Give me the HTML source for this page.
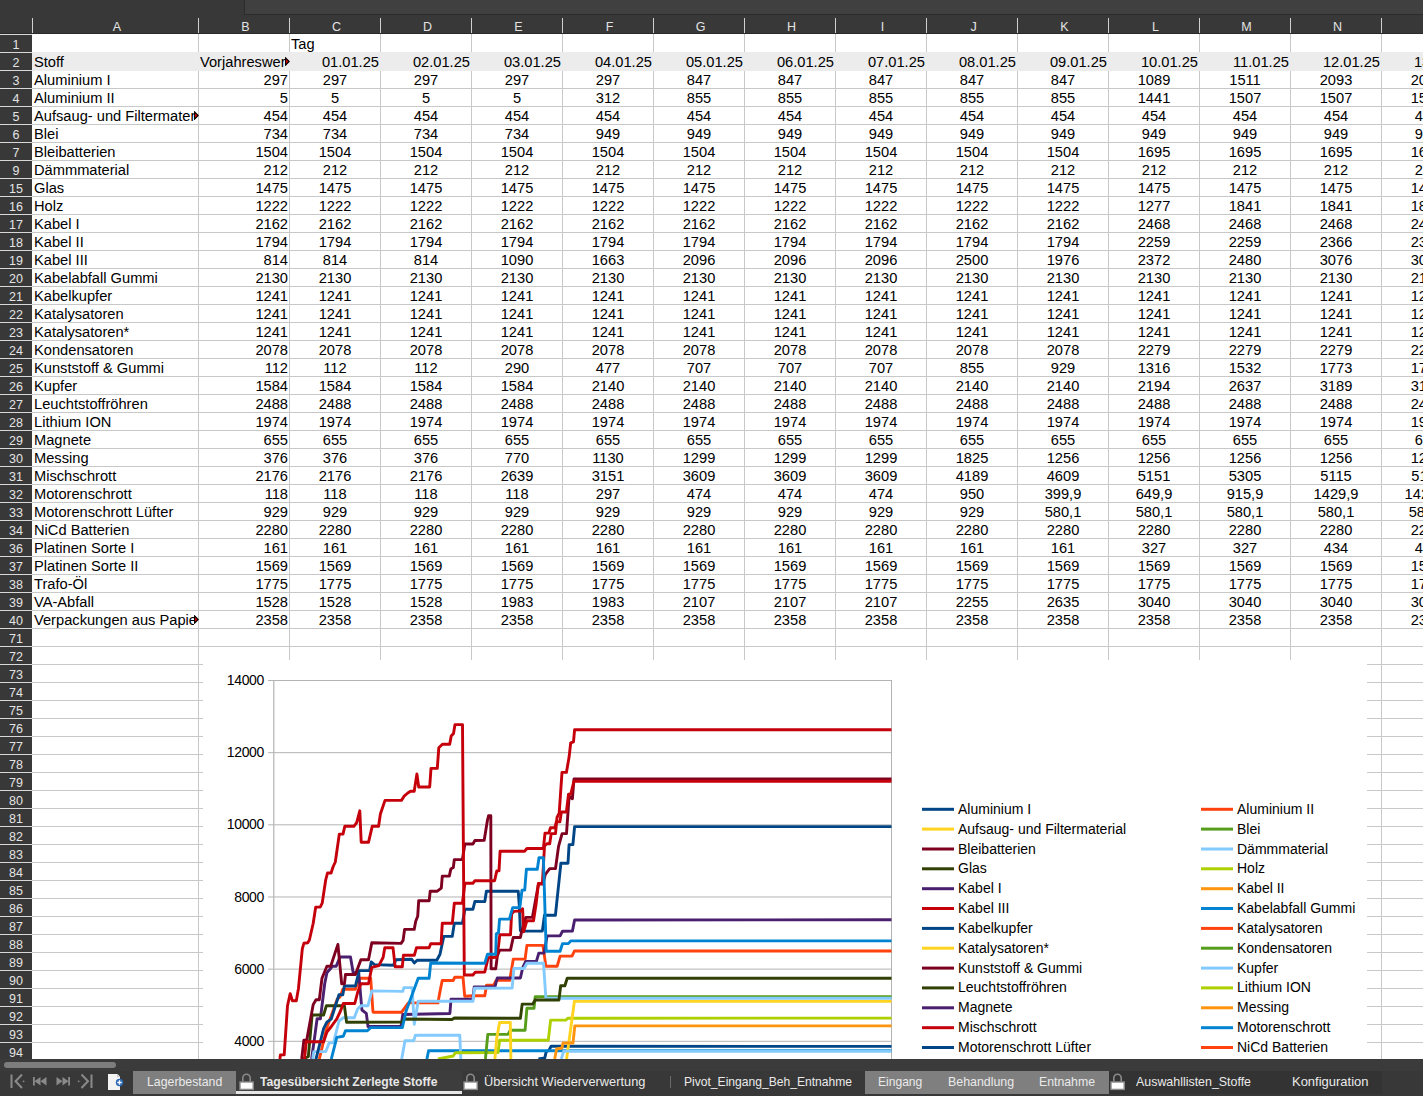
<!DOCTYPE html>
<html><head><meta charset="utf-8"><style>
*{margin:0;padding:0;box-sizing:border-box}
html,body{width:1423px;height:1096px;overflow:hidden;background:#383838;font-family:"Liberation Sans",sans-serif}
#top{position:absolute;left:0;top:0;width:1423px;height:34px;background:#383838}
#tbox{position:absolute;left:244px;top:0;width:1179px;height:15px;background:#404040;border-left:1px solid #2c2c2c;border-bottom:1px solid #2c2c2c}
#hdark{position:absolute;left:0;top:33px;width:1423px;height:1px;background:#2a2a2a}
#cells{position:absolute;left:32px;top:34px;width:1391px;height:1025px;background:#fff;overflow:hidden}
#cells > div{position:absolute}
.hl{left:0;width:1391px;height:1px;background:#c8c8c8}
.vl{top:0;height:1025px;width:1px;background:#c8c8c8}
.g2{top:18px;left:0;width:1391px;height:19px;background:#ececec}
.c{height:18px;font-size:14.67px;line-height:18px;color:#000;white-space:nowrap;padding:1px 1px 0 2px;overflow:visible}
.clip{overflow:hidden}
.l{text-align:left}
.r{text-align:right}
.m{text-align:center}
.arr{width:0;height:0;border-top:3px solid transparent;border-bottom:3px solid transparent;border-left:5px solid #000}
.rh{position:absolute;left:0;width:32px;height:17px;color:#e4e4e4;font-size:12.5px;line-height:17px;text-align:center}
.rsep{position:absolute;left:0;width:32px;height:1px;background:#d8d8d8}
.ch{position:absolute;top:19px;height:16px;color:#e4e4e4;font-size:12.5px;line-height:17px;text-align:center}
.csep{position:absolute;top:18px;width:1px;height:15px;background:#d0d0d0}

.hl{position:absolute;left:32px;width:1391px;height:1px;background:#c8c8c8}
.vl{position:absolute;top:34px;height:1025px;width:1px;background:#c8c8c8}
.g2{position:absolute;top:52px;left:32px;width:1391px;height:19px;background:#ececec}
.c,.arr{position:absolute}
</style></head><body>
<div id="top"><div id="tbox"></div></div>
<div class="csep" style="left:32px"></div>
<div class="csep" style="left:198px"></div>
<div class="csep" style="left:289px"></div>
<div class="csep" style="left:380px"></div>
<div class="csep" style="left:471px"></div>
<div class="csep" style="left:562px"></div>
<div class="csep" style="left:653px"></div>
<div class="csep" style="left:744px"></div>
<div class="csep" style="left:835px"></div>
<div class="csep" style="left:926px"></div>
<div class="csep" style="left:1017px"></div>
<div class="csep" style="left:1108px"></div>
<div class="csep" style="left:1199px"></div>
<div class="csep" style="left:1290px"></div>
<div class="csep" style="left:1381px"></div>
<div id="hdark"></div>
<div class="rsep" style="top:34px"></div>
<div class="rsep" style="top:52px"></div>
<div class="rsep" style="top:70px"></div>
<div class="rsep" style="top:88px"></div>
<div class="rsep" style="top:106px"></div>
<div class="rsep" style="top:124px"></div>
<div class="rsep" style="top:142px"></div>
<div class="rsep" style="top:160px"></div>
<div class="rsep" style="top:178px"></div>
<div class="rsep" style="top:196px"></div>
<div class="rsep" style="top:214px"></div>
<div class="rsep" style="top:232px"></div>
<div class="rsep" style="top:250px"></div>
<div class="rsep" style="top:268px"></div>
<div class="rsep" style="top:286px"></div>
<div class="rsep" style="top:304px"></div>
<div class="rsep" style="top:322px"></div>
<div class="rsep" style="top:340px"></div>
<div class="rsep" style="top:358px"></div>
<div class="rsep" style="top:376px"></div>
<div class="rsep" style="top:394px"></div>
<div class="rsep" style="top:412px"></div>
<div class="rsep" style="top:430px"></div>
<div class="rsep" style="top:448px"></div>
<div class="rsep" style="top:466px"></div>
<div class="rsep" style="top:484px"></div>
<div class="rsep" style="top:502px"></div>
<div class="rsep" style="top:520px"></div>
<div class="rsep" style="top:538px"></div>
<div class="rsep" style="top:556px"></div>
<div class="rsep" style="top:574px"></div>
<div class="rsep" style="top:592px"></div>
<div class="rsep" style="top:610px"></div>
<div class="rsep" style="top:628px"></div>
<div class="rsep" style="top:646px"></div>
<div class="rsep" style="top:664px"></div>
<div class="rsep" style="top:682px"></div>
<div class="rsep" style="top:700px"></div>
<div class="rsep" style="top:718px"></div>
<div class="rsep" style="top:736px"></div>
<div class="rsep" style="top:754px"></div>
<div class="rsep" style="top:772px"></div>
<div class="rsep" style="top:790px"></div>
<div class="rsep" style="top:808px"></div>
<div class="rsep" style="top:826px"></div>
<div class="rsep" style="top:844px"></div>
<div class="rsep" style="top:862px"></div>
<div class="rsep" style="top:880px"></div>
<div class="rsep" style="top:898px"></div>
<div class="rsep" style="top:916px"></div>
<div class="rsep" style="top:934px"></div>
<div class="rsep" style="top:952px"></div>
<div class="rsep" style="top:970px"></div>
<div class="rsep" style="top:988px"></div>
<div class="rsep" style="top:1006px"></div>
<div class="rsep" style="top:1024px"></div>
<div class="rsep" style="top:1042px"></div>
<div id="cellsbg" style="position:absolute;left:32px;top:34px;width:1391px;height:1025px;background:#fff"></div>
<div class="hl" style="top:70px"></div>
<div class="hl" style="top:88px"></div>
<div class="hl" style="top:106px"></div>
<div class="hl" style="top:124px"></div>
<div class="hl" style="top:142px"></div>
<div class="hl" style="top:160px"></div>
<div class="hl" style="top:178px"></div>
<div class="hl" style="top:196px"></div>
<div class="hl" style="top:214px"></div>
<div class="hl" style="top:232px"></div>
<div class="hl" style="top:250px"></div>
<div class="hl" style="top:268px"></div>
<div class="hl" style="top:286px"></div>
<div class="hl" style="top:304px"></div>
<div class="hl" style="top:322px"></div>
<div class="hl" style="top:340px"></div>
<div class="hl" style="top:358px"></div>
<div class="hl" style="top:376px"></div>
<div class="hl" style="top:394px"></div>
<div class="hl" style="top:412px"></div>
<div class="hl" style="top:430px"></div>
<div class="hl" style="top:448px"></div>
<div class="hl" style="top:466px"></div>
<div class="hl" style="top:484px"></div>
<div class="hl" style="top:502px"></div>
<div class="hl" style="top:520px"></div>
<div class="hl" style="top:538px"></div>
<div class="hl" style="top:556px"></div>
<div class="hl" style="top:574px"></div>
<div class="hl" style="top:592px"></div>
<div class="hl" style="top:610px"></div>
<div class="hl" style="top:628px"></div>
<div class="hl" style="top:646px"></div>
<div class="hl" style="top:664px"></div>
<div class="hl" style="top:682px"></div>
<div class="hl" style="top:700px"></div>
<div class="hl" style="top:718px"></div>
<div class="hl" style="top:736px"></div>
<div class="hl" style="top:754px"></div>
<div class="hl" style="top:772px"></div>
<div class="hl" style="top:790px"></div>
<div class="hl" style="top:808px"></div>
<div class="hl" style="top:826px"></div>
<div class="hl" style="top:844px"></div>
<div class="hl" style="top:862px"></div>
<div class="hl" style="top:880px"></div>
<div class="hl" style="top:898px"></div>
<div class="hl" style="top:916px"></div>
<div class="hl" style="top:934px"></div>
<div class="hl" style="top:952px"></div>
<div class="hl" style="top:970px"></div>
<div class="hl" style="top:988px"></div>
<div class="hl" style="top:1006px"></div>
<div class="hl" style="top:1024px"></div>
<div class="hl" style="top:1042px"></div>
<div class="vl" style="left:198px"></div>
<div class="vl" style="left:289px"></div>
<div class="vl" style="left:380px"></div>
<div class="vl" style="left:471px"></div>
<div class="vl" style="left:562px"></div>
<div class="vl" style="left:653px"></div>
<div class="vl" style="left:744px"></div>
<div class="vl" style="left:835px"></div>
<div class="vl" style="left:926px"></div>
<div class="vl" style="left:1017px"></div>
<div class="vl" style="left:1108px"></div>
<div class="vl" style="left:1199px"></div>
<div class="vl" style="left:1290px"></div>
<div class="vl" style="left:1381px"></div>
<div class="g2"></div>
<div class="rh" style="top:37px">1</div>
<div class="rh" style="top:55px">2</div>
<div class="rh" style="top:73px">3</div>
<div class="rh" style="top:91px">4</div>
<div class="rh" style="top:109px">5</div>
<div class="rh" style="top:127px">6</div>
<div class="rh" style="top:145px">7</div>
<div class="rh" style="top:163px">9</div>
<div class="rh" style="top:181px">15</div>
<div class="rh" style="top:199px">16</div>
<div class="rh" style="top:217px">17</div>
<div class="rh" style="top:235px">18</div>
<div class="rh" style="top:253px">19</div>
<div class="rh" style="top:271px">20</div>
<div class="rh" style="top:289px">21</div>
<div class="rh" style="top:307px">22</div>
<div class="rh" style="top:325px">23</div>
<div class="rh" style="top:343px">24</div>
<div class="rh" style="top:361px">25</div>
<div class="rh" style="top:379px">26</div>
<div class="rh" style="top:397px">27</div>
<div class="rh" style="top:415px">28</div>
<div class="rh" style="top:433px">29</div>
<div class="rh" style="top:451px">30</div>
<div class="rh" style="top:469px">31</div>
<div class="rh" style="top:487px">32</div>
<div class="rh" style="top:505px">33</div>
<div class="rh" style="top:523px">34</div>
<div class="rh" style="top:541px">36</div>
<div class="rh" style="top:559px">37</div>
<div class="rh" style="top:577px">38</div>
<div class="rh" style="top:595px">39</div>
<div class="rh" style="top:613px">40</div>
<div class="rh" style="top:631px">71</div>
<div class="rh" style="top:649px">72</div>
<div class="rh" style="top:667px">73</div>
<div class="rh" style="top:685px">74</div>
<div class="rh" style="top:703px">75</div>
<div class="rh" style="top:721px">76</div>
<div class="rh" style="top:739px">77</div>
<div class="rh" style="top:757px">78</div>
<div class="rh" style="top:775px">79</div>
<div class="rh" style="top:793px">80</div>
<div class="rh" style="top:811px">81</div>
<div class="rh" style="top:829px">82</div>
<div class="rh" style="top:847px">83</div>
<div class="rh" style="top:865px">84</div>
<div class="rh" style="top:883px">85</div>
<div class="rh" style="top:901px">86</div>
<div class="rh" style="top:919px">87</div>
<div class="rh" style="top:937px">88</div>
<div class="rh" style="top:955px">89</div>
<div class="rh" style="top:973px">90</div>
<div class="rh" style="top:991px">91</div>
<div class="rh" style="top:1009px">92</div>
<div class="rh" style="top:1027px">93</div>
<div class="rh" style="top:1045px">94</div>
<div class="ch" style="left:34px;width:166px">A</div>
<div class="ch" style="left:200px;width:91px">B</div>
<div class="ch" style="left:291px;width:91px">C</div>
<div class="ch" style="left:382px;width:91px">D</div>
<div class="ch" style="left:473px;width:91px">E</div>
<div class="ch" style="left:564px;width:91px">F</div>
<div class="ch" style="left:655px;width:91px">G</div>
<div class="ch" style="left:746px;width:91px">H</div>
<div class="ch" style="left:837px;width:91px">I</div>
<div class="ch" style="left:928px;width:91px">J</div>
<div class="ch" style="left:1019px;width:91px">K</div>
<div class="ch" style="left:1110px;width:91px">L</div>
<div class="ch" style="left:1201px;width:91px">M</div>
<div class="ch" style="left:1292px;width:91px">N</div>
<div class="ch" style="left:1383px;width:91px">O</div>
<div class="c l" style="top:34px;left:289px;width:91px">Tag</div>
<div class="c l" style="top:52px;left:32px;width:166px">Stoff</div>
<div class="c l clip" style="top:52px;left:198px;width:87px">Vorjahreswert</div>
<div class="c r" style="top:52px;left:289px;width:91px">01.01.25</div>
<div class="c r" style="top:52px;left:380px;width:91px">02.01.25</div>
<div class="c r" style="top:52px;left:471px;width:91px">03.01.25</div>
<div class="c r" style="top:52px;left:562px;width:91px">04.01.25</div>
<div class="c r" style="top:52px;left:653px;width:91px">05.01.25</div>
<div class="c r" style="top:52px;left:744px;width:91px">06.01.25</div>
<div class="c r" style="top:52px;left:835px;width:91px">07.01.25</div>
<div class="c r" style="top:52px;left:926px;width:91px">08.01.25</div>
<div class="c r" style="top:52px;left:1017px;width:91px">09.01.25</div>
<div class="c r" style="top:52px;left:1108px;width:91px">10.01.25</div>
<div class="c r" style="top:52px;left:1199px;width:91px">11.01.25</div>
<div class="c r" style="top:52px;left:1290px;width:91px">12.01.25</div>
<div class="c r" style="top:52px;left:1381px;width:91px">13.01.25</div>
<div class="c l clip" style="top:70px;left:32px;width:162px">Aluminium I</div>
<div class="c r" style="top:70px;left:198px;width:91px">297</div>
<div class="c m" style="top:70px;left:289px;width:91px">297</div>
<div class="c m" style="top:70px;left:380px;width:91px">297</div>
<div class="c m" style="top:70px;left:471px;width:91px">297</div>
<div class="c m" style="top:70px;left:562px;width:91px">297</div>
<div class="c m" style="top:70px;left:653px;width:91px">847</div>
<div class="c m" style="top:70px;left:744px;width:91px">847</div>
<div class="c m" style="top:70px;left:835px;width:91px">847</div>
<div class="c m" style="top:70px;left:926px;width:91px">847</div>
<div class="c m" style="top:70px;left:1017px;width:91px">847</div>
<div class="c m" style="top:70px;left:1108px;width:91px">1089</div>
<div class="c m" style="top:70px;left:1199px;width:91px">1511</div>
<div class="c m" style="top:70px;left:1290px;width:91px">2093</div>
<div class="c m" style="top:70px;left:1381px;width:91px">2093</div>
<div class="c l clip" style="top:88px;left:32px;width:162px">Aluminium II</div>
<div class="c r" style="top:88px;left:198px;width:91px">5</div>
<div class="c m" style="top:88px;left:289px;width:91px">5</div>
<div class="c m" style="top:88px;left:380px;width:91px">5</div>
<div class="c m" style="top:88px;left:471px;width:91px">5</div>
<div class="c m" style="top:88px;left:562px;width:91px">312</div>
<div class="c m" style="top:88px;left:653px;width:91px">855</div>
<div class="c m" style="top:88px;left:744px;width:91px">855</div>
<div class="c m" style="top:88px;left:835px;width:91px">855</div>
<div class="c m" style="top:88px;left:926px;width:91px">855</div>
<div class="c m" style="top:88px;left:1017px;width:91px">855</div>
<div class="c m" style="top:88px;left:1108px;width:91px">1441</div>
<div class="c m" style="top:88px;left:1199px;width:91px">1507</div>
<div class="c m" style="top:88px;left:1290px;width:91px">1507</div>
<div class="c m" style="top:88px;left:1381px;width:91px">1507</div>
<div class="c l clip" style="top:106px;left:32px;width:162px">Aufsaug- und Filtermaterial</div>
<div class="c r" style="top:106px;left:198px;width:91px">454</div>
<div class="c m" style="top:106px;left:289px;width:91px">454</div>
<div class="c m" style="top:106px;left:380px;width:91px">454</div>
<div class="c m" style="top:106px;left:471px;width:91px">454</div>
<div class="c m" style="top:106px;left:562px;width:91px">454</div>
<div class="c m" style="top:106px;left:653px;width:91px">454</div>
<div class="c m" style="top:106px;left:744px;width:91px">454</div>
<div class="c m" style="top:106px;left:835px;width:91px">454</div>
<div class="c m" style="top:106px;left:926px;width:91px">454</div>
<div class="c m" style="top:106px;left:1017px;width:91px">454</div>
<div class="c m" style="top:106px;left:1108px;width:91px">454</div>
<div class="c m" style="top:106px;left:1199px;width:91px">454</div>
<div class="c m" style="top:106px;left:1290px;width:91px">454</div>
<div class="c m" style="top:106px;left:1381px;width:91px">454</div>
<div class="c l clip" style="top:124px;left:32px;width:162px">Blei</div>
<div class="c r" style="top:124px;left:198px;width:91px">734</div>
<div class="c m" style="top:124px;left:289px;width:91px">734</div>
<div class="c m" style="top:124px;left:380px;width:91px">734</div>
<div class="c m" style="top:124px;left:471px;width:91px">734</div>
<div class="c m" style="top:124px;left:562px;width:91px">949</div>
<div class="c m" style="top:124px;left:653px;width:91px">949</div>
<div class="c m" style="top:124px;left:744px;width:91px">949</div>
<div class="c m" style="top:124px;left:835px;width:91px">949</div>
<div class="c m" style="top:124px;left:926px;width:91px">949</div>
<div class="c m" style="top:124px;left:1017px;width:91px">949</div>
<div class="c m" style="top:124px;left:1108px;width:91px">949</div>
<div class="c m" style="top:124px;left:1199px;width:91px">949</div>
<div class="c m" style="top:124px;left:1290px;width:91px">949</div>
<div class="c m" style="top:124px;left:1381px;width:91px">949</div>
<div class="c l clip" style="top:142px;left:32px;width:162px">Bleibatterien</div>
<div class="c r" style="top:142px;left:198px;width:91px">1504</div>
<div class="c m" style="top:142px;left:289px;width:91px">1504</div>
<div class="c m" style="top:142px;left:380px;width:91px">1504</div>
<div class="c m" style="top:142px;left:471px;width:91px">1504</div>
<div class="c m" style="top:142px;left:562px;width:91px">1504</div>
<div class="c m" style="top:142px;left:653px;width:91px">1504</div>
<div class="c m" style="top:142px;left:744px;width:91px">1504</div>
<div class="c m" style="top:142px;left:835px;width:91px">1504</div>
<div class="c m" style="top:142px;left:926px;width:91px">1504</div>
<div class="c m" style="top:142px;left:1017px;width:91px">1504</div>
<div class="c m" style="top:142px;left:1108px;width:91px">1695</div>
<div class="c m" style="top:142px;left:1199px;width:91px">1695</div>
<div class="c m" style="top:142px;left:1290px;width:91px">1695</div>
<div class="c m" style="top:142px;left:1381px;width:91px">1695</div>
<div class="c l clip" style="top:160px;left:32px;width:162px">Dämmmaterial</div>
<div class="c r" style="top:160px;left:198px;width:91px">212</div>
<div class="c m" style="top:160px;left:289px;width:91px">212</div>
<div class="c m" style="top:160px;left:380px;width:91px">212</div>
<div class="c m" style="top:160px;left:471px;width:91px">212</div>
<div class="c m" style="top:160px;left:562px;width:91px">212</div>
<div class="c m" style="top:160px;left:653px;width:91px">212</div>
<div class="c m" style="top:160px;left:744px;width:91px">212</div>
<div class="c m" style="top:160px;left:835px;width:91px">212</div>
<div class="c m" style="top:160px;left:926px;width:91px">212</div>
<div class="c m" style="top:160px;left:1017px;width:91px">212</div>
<div class="c m" style="top:160px;left:1108px;width:91px">212</div>
<div class="c m" style="top:160px;left:1199px;width:91px">212</div>
<div class="c m" style="top:160px;left:1290px;width:91px">212</div>
<div class="c m" style="top:160px;left:1381px;width:91px">212</div>
<div class="c l clip" style="top:178px;left:32px;width:162px">Glas</div>
<div class="c r" style="top:178px;left:198px;width:91px">1475</div>
<div class="c m" style="top:178px;left:289px;width:91px">1475</div>
<div class="c m" style="top:178px;left:380px;width:91px">1475</div>
<div class="c m" style="top:178px;left:471px;width:91px">1475</div>
<div class="c m" style="top:178px;left:562px;width:91px">1475</div>
<div class="c m" style="top:178px;left:653px;width:91px">1475</div>
<div class="c m" style="top:178px;left:744px;width:91px">1475</div>
<div class="c m" style="top:178px;left:835px;width:91px">1475</div>
<div class="c m" style="top:178px;left:926px;width:91px">1475</div>
<div class="c m" style="top:178px;left:1017px;width:91px">1475</div>
<div class="c m" style="top:178px;left:1108px;width:91px">1475</div>
<div class="c m" style="top:178px;left:1199px;width:91px">1475</div>
<div class="c m" style="top:178px;left:1290px;width:91px">1475</div>
<div class="c m" style="top:178px;left:1381px;width:91px">1475</div>
<div class="c l clip" style="top:196px;left:32px;width:162px">Holz</div>
<div class="c r" style="top:196px;left:198px;width:91px">1222</div>
<div class="c m" style="top:196px;left:289px;width:91px">1222</div>
<div class="c m" style="top:196px;left:380px;width:91px">1222</div>
<div class="c m" style="top:196px;left:471px;width:91px">1222</div>
<div class="c m" style="top:196px;left:562px;width:91px">1222</div>
<div class="c m" style="top:196px;left:653px;width:91px">1222</div>
<div class="c m" style="top:196px;left:744px;width:91px">1222</div>
<div class="c m" style="top:196px;left:835px;width:91px">1222</div>
<div class="c m" style="top:196px;left:926px;width:91px">1222</div>
<div class="c m" style="top:196px;left:1017px;width:91px">1222</div>
<div class="c m" style="top:196px;left:1108px;width:91px">1277</div>
<div class="c m" style="top:196px;left:1199px;width:91px">1841</div>
<div class="c m" style="top:196px;left:1290px;width:91px">1841</div>
<div class="c m" style="top:196px;left:1381px;width:91px">1841</div>
<div class="c l clip" style="top:214px;left:32px;width:162px">Kabel I</div>
<div class="c r" style="top:214px;left:198px;width:91px">2162</div>
<div class="c m" style="top:214px;left:289px;width:91px">2162</div>
<div class="c m" style="top:214px;left:380px;width:91px">2162</div>
<div class="c m" style="top:214px;left:471px;width:91px">2162</div>
<div class="c m" style="top:214px;left:562px;width:91px">2162</div>
<div class="c m" style="top:214px;left:653px;width:91px">2162</div>
<div class="c m" style="top:214px;left:744px;width:91px">2162</div>
<div class="c m" style="top:214px;left:835px;width:91px">2162</div>
<div class="c m" style="top:214px;left:926px;width:91px">2162</div>
<div class="c m" style="top:214px;left:1017px;width:91px">2162</div>
<div class="c m" style="top:214px;left:1108px;width:91px">2468</div>
<div class="c m" style="top:214px;left:1199px;width:91px">2468</div>
<div class="c m" style="top:214px;left:1290px;width:91px">2468</div>
<div class="c m" style="top:214px;left:1381px;width:91px">2468</div>
<div class="c l clip" style="top:232px;left:32px;width:162px">Kabel II</div>
<div class="c r" style="top:232px;left:198px;width:91px">1794</div>
<div class="c m" style="top:232px;left:289px;width:91px">1794</div>
<div class="c m" style="top:232px;left:380px;width:91px">1794</div>
<div class="c m" style="top:232px;left:471px;width:91px">1794</div>
<div class="c m" style="top:232px;left:562px;width:91px">1794</div>
<div class="c m" style="top:232px;left:653px;width:91px">1794</div>
<div class="c m" style="top:232px;left:744px;width:91px">1794</div>
<div class="c m" style="top:232px;left:835px;width:91px">1794</div>
<div class="c m" style="top:232px;left:926px;width:91px">1794</div>
<div class="c m" style="top:232px;left:1017px;width:91px">1794</div>
<div class="c m" style="top:232px;left:1108px;width:91px">2259</div>
<div class="c m" style="top:232px;left:1199px;width:91px">2259</div>
<div class="c m" style="top:232px;left:1290px;width:91px">2366</div>
<div class="c m" style="top:232px;left:1381px;width:91px">2366</div>
<div class="c l clip" style="top:250px;left:32px;width:162px">Kabel III</div>
<div class="c r" style="top:250px;left:198px;width:91px">814</div>
<div class="c m" style="top:250px;left:289px;width:91px">814</div>
<div class="c m" style="top:250px;left:380px;width:91px">814</div>
<div class="c m" style="top:250px;left:471px;width:91px">1090</div>
<div class="c m" style="top:250px;left:562px;width:91px">1663</div>
<div class="c m" style="top:250px;left:653px;width:91px">2096</div>
<div class="c m" style="top:250px;left:744px;width:91px">2096</div>
<div class="c m" style="top:250px;left:835px;width:91px">2096</div>
<div class="c m" style="top:250px;left:926px;width:91px">2500</div>
<div class="c m" style="top:250px;left:1017px;width:91px">1976</div>
<div class="c m" style="top:250px;left:1108px;width:91px">2372</div>
<div class="c m" style="top:250px;left:1199px;width:91px">2480</div>
<div class="c m" style="top:250px;left:1290px;width:91px">3076</div>
<div class="c m" style="top:250px;left:1381px;width:91px">3076</div>
<div class="c l clip" style="top:268px;left:32px;width:162px">Kabelabfall Gummi</div>
<div class="c r" style="top:268px;left:198px;width:91px">2130</div>
<div class="c m" style="top:268px;left:289px;width:91px">2130</div>
<div class="c m" style="top:268px;left:380px;width:91px">2130</div>
<div class="c m" style="top:268px;left:471px;width:91px">2130</div>
<div class="c m" style="top:268px;left:562px;width:91px">2130</div>
<div class="c m" style="top:268px;left:653px;width:91px">2130</div>
<div class="c m" style="top:268px;left:744px;width:91px">2130</div>
<div class="c m" style="top:268px;left:835px;width:91px">2130</div>
<div class="c m" style="top:268px;left:926px;width:91px">2130</div>
<div class="c m" style="top:268px;left:1017px;width:91px">2130</div>
<div class="c m" style="top:268px;left:1108px;width:91px">2130</div>
<div class="c m" style="top:268px;left:1199px;width:91px">2130</div>
<div class="c m" style="top:268px;left:1290px;width:91px">2130</div>
<div class="c m" style="top:268px;left:1381px;width:91px">2130</div>
<div class="c l clip" style="top:286px;left:32px;width:162px">Kabelkupfer</div>
<div class="c r" style="top:286px;left:198px;width:91px">1241</div>
<div class="c m" style="top:286px;left:289px;width:91px">1241</div>
<div class="c m" style="top:286px;left:380px;width:91px">1241</div>
<div class="c m" style="top:286px;left:471px;width:91px">1241</div>
<div class="c m" style="top:286px;left:562px;width:91px">1241</div>
<div class="c m" style="top:286px;left:653px;width:91px">1241</div>
<div class="c m" style="top:286px;left:744px;width:91px">1241</div>
<div class="c m" style="top:286px;left:835px;width:91px">1241</div>
<div class="c m" style="top:286px;left:926px;width:91px">1241</div>
<div class="c m" style="top:286px;left:1017px;width:91px">1241</div>
<div class="c m" style="top:286px;left:1108px;width:91px">1241</div>
<div class="c m" style="top:286px;left:1199px;width:91px">1241</div>
<div class="c m" style="top:286px;left:1290px;width:91px">1241</div>
<div class="c m" style="top:286px;left:1381px;width:91px">1241</div>
<div class="c l clip" style="top:304px;left:32px;width:162px">Katalysatoren</div>
<div class="c r" style="top:304px;left:198px;width:91px">1241</div>
<div class="c m" style="top:304px;left:289px;width:91px">1241</div>
<div class="c m" style="top:304px;left:380px;width:91px">1241</div>
<div class="c m" style="top:304px;left:471px;width:91px">1241</div>
<div class="c m" style="top:304px;left:562px;width:91px">1241</div>
<div class="c m" style="top:304px;left:653px;width:91px">1241</div>
<div class="c m" style="top:304px;left:744px;width:91px">1241</div>
<div class="c m" style="top:304px;left:835px;width:91px">1241</div>
<div class="c m" style="top:304px;left:926px;width:91px">1241</div>
<div class="c m" style="top:304px;left:1017px;width:91px">1241</div>
<div class="c m" style="top:304px;left:1108px;width:91px">1241</div>
<div class="c m" style="top:304px;left:1199px;width:91px">1241</div>
<div class="c m" style="top:304px;left:1290px;width:91px">1241</div>
<div class="c m" style="top:304px;left:1381px;width:91px">1241</div>
<div class="c l clip" style="top:322px;left:32px;width:162px">Katalysatoren*</div>
<div class="c r" style="top:322px;left:198px;width:91px">1241</div>
<div class="c m" style="top:322px;left:289px;width:91px">1241</div>
<div class="c m" style="top:322px;left:380px;width:91px">1241</div>
<div class="c m" style="top:322px;left:471px;width:91px">1241</div>
<div class="c m" style="top:322px;left:562px;width:91px">1241</div>
<div class="c m" style="top:322px;left:653px;width:91px">1241</div>
<div class="c m" style="top:322px;left:744px;width:91px">1241</div>
<div class="c m" style="top:322px;left:835px;width:91px">1241</div>
<div class="c m" style="top:322px;left:926px;width:91px">1241</div>
<div class="c m" style="top:322px;left:1017px;width:91px">1241</div>
<div class="c m" style="top:322px;left:1108px;width:91px">1241</div>
<div class="c m" style="top:322px;left:1199px;width:91px">1241</div>
<div class="c m" style="top:322px;left:1290px;width:91px">1241</div>
<div class="c m" style="top:322px;left:1381px;width:91px">1241</div>
<div class="c l clip" style="top:340px;left:32px;width:162px">Kondensatoren</div>
<div class="c r" style="top:340px;left:198px;width:91px">2078</div>
<div class="c m" style="top:340px;left:289px;width:91px">2078</div>
<div class="c m" style="top:340px;left:380px;width:91px">2078</div>
<div class="c m" style="top:340px;left:471px;width:91px">2078</div>
<div class="c m" style="top:340px;left:562px;width:91px">2078</div>
<div class="c m" style="top:340px;left:653px;width:91px">2078</div>
<div class="c m" style="top:340px;left:744px;width:91px">2078</div>
<div class="c m" style="top:340px;left:835px;width:91px">2078</div>
<div class="c m" style="top:340px;left:926px;width:91px">2078</div>
<div class="c m" style="top:340px;left:1017px;width:91px">2078</div>
<div class="c m" style="top:340px;left:1108px;width:91px">2279</div>
<div class="c m" style="top:340px;left:1199px;width:91px">2279</div>
<div class="c m" style="top:340px;left:1290px;width:91px">2279</div>
<div class="c m" style="top:340px;left:1381px;width:91px">2279</div>
<div class="c l clip" style="top:358px;left:32px;width:162px">Kunststoff &amp; Gummi</div>
<div class="c r" style="top:358px;left:198px;width:91px">112</div>
<div class="c m" style="top:358px;left:289px;width:91px">112</div>
<div class="c m" style="top:358px;left:380px;width:91px">112</div>
<div class="c m" style="top:358px;left:471px;width:91px">290</div>
<div class="c m" style="top:358px;left:562px;width:91px">477</div>
<div class="c m" style="top:358px;left:653px;width:91px">707</div>
<div class="c m" style="top:358px;left:744px;width:91px">707</div>
<div class="c m" style="top:358px;left:835px;width:91px">707</div>
<div class="c m" style="top:358px;left:926px;width:91px">855</div>
<div class="c m" style="top:358px;left:1017px;width:91px">929</div>
<div class="c m" style="top:358px;left:1108px;width:91px">1316</div>
<div class="c m" style="top:358px;left:1199px;width:91px">1532</div>
<div class="c m" style="top:358px;left:1290px;width:91px">1773</div>
<div class="c m" style="top:358px;left:1381px;width:91px">1773</div>
<div class="c l clip" style="top:376px;left:32px;width:162px">Kupfer</div>
<div class="c r" style="top:376px;left:198px;width:91px">1584</div>
<div class="c m" style="top:376px;left:289px;width:91px">1584</div>
<div class="c m" style="top:376px;left:380px;width:91px">1584</div>
<div class="c m" style="top:376px;left:471px;width:91px">1584</div>
<div class="c m" style="top:376px;left:562px;width:91px">2140</div>
<div class="c m" style="top:376px;left:653px;width:91px">2140</div>
<div class="c m" style="top:376px;left:744px;width:91px">2140</div>
<div class="c m" style="top:376px;left:835px;width:91px">2140</div>
<div class="c m" style="top:376px;left:926px;width:91px">2140</div>
<div class="c m" style="top:376px;left:1017px;width:91px">2140</div>
<div class="c m" style="top:376px;left:1108px;width:91px">2194</div>
<div class="c m" style="top:376px;left:1199px;width:91px">2637</div>
<div class="c m" style="top:376px;left:1290px;width:91px">3189</div>
<div class="c m" style="top:376px;left:1381px;width:91px">3189</div>
<div class="c l clip" style="top:394px;left:32px;width:162px">Leuchtstoffröhren</div>
<div class="c r" style="top:394px;left:198px;width:91px">2488</div>
<div class="c m" style="top:394px;left:289px;width:91px">2488</div>
<div class="c m" style="top:394px;left:380px;width:91px">2488</div>
<div class="c m" style="top:394px;left:471px;width:91px">2488</div>
<div class="c m" style="top:394px;left:562px;width:91px">2488</div>
<div class="c m" style="top:394px;left:653px;width:91px">2488</div>
<div class="c m" style="top:394px;left:744px;width:91px">2488</div>
<div class="c m" style="top:394px;left:835px;width:91px">2488</div>
<div class="c m" style="top:394px;left:926px;width:91px">2488</div>
<div class="c m" style="top:394px;left:1017px;width:91px">2488</div>
<div class="c m" style="top:394px;left:1108px;width:91px">2488</div>
<div class="c m" style="top:394px;left:1199px;width:91px">2488</div>
<div class="c m" style="top:394px;left:1290px;width:91px">2488</div>
<div class="c m" style="top:394px;left:1381px;width:91px">2488</div>
<div class="c l clip" style="top:412px;left:32px;width:162px">Lithium ION</div>
<div class="c r" style="top:412px;left:198px;width:91px">1974</div>
<div class="c m" style="top:412px;left:289px;width:91px">1974</div>
<div class="c m" style="top:412px;left:380px;width:91px">1974</div>
<div class="c m" style="top:412px;left:471px;width:91px">1974</div>
<div class="c m" style="top:412px;left:562px;width:91px">1974</div>
<div class="c m" style="top:412px;left:653px;width:91px">1974</div>
<div class="c m" style="top:412px;left:744px;width:91px">1974</div>
<div class="c m" style="top:412px;left:835px;width:91px">1974</div>
<div class="c m" style="top:412px;left:926px;width:91px">1974</div>
<div class="c m" style="top:412px;left:1017px;width:91px">1974</div>
<div class="c m" style="top:412px;left:1108px;width:91px">1974</div>
<div class="c m" style="top:412px;left:1199px;width:91px">1974</div>
<div class="c m" style="top:412px;left:1290px;width:91px">1974</div>
<div class="c m" style="top:412px;left:1381px;width:91px">1974</div>
<div class="c l clip" style="top:430px;left:32px;width:162px">Magnete</div>
<div class="c r" style="top:430px;left:198px;width:91px">655</div>
<div class="c m" style="top:430px;left:289px;width:91px">655</div>
<div class="c m" style="top:430px;left:380px;width:91px">655</div>
<div class="c m" style="top:430px;left:471px;width:91px">655</div>
<div class="c m" style="top:430px;left:562px;width:91px">655</div>
<div class="c m" style="top:430px;left:653px;width:91px">655</div>
<div class="c m" style="top:430px;left:744px;width:91px">655</div>
<div class="c m" style="top:430px;left:835px;width:91px">655</div>
<div class="c m" style="top:430px;left:926px;width:91px">655</div>
<div class="c m" style="top:430px;left:1017px;width:91px">655</div>
<div class="c m" style="top:430px;left:1108px;width:91px">655</div>
<div class="c m" style="top:430px;left:1199px;width:91px">655</div>
<div class="c m" style="top:430px;left:1290px;width:91px">655</div>
<div class="c m" style="top:430px;left:1381px;width:91px">655</div>
<div class="c l clip" style="top:448px;left:32px;width:162px">Messing</div>
<div class="c r" style="top:448px;left:198px;width:91px">376</div>
<div class="c m" style="top:448px;left:289px;width:91px">376</div>
<div class="c m" style="top:448px;left:380px;width:91px">376</div>
<div class="c m" style="top:448px;left:471px;width:91px">770</div>
<div class="c m" style="top:448px;left:562px;width:91px">1130</div>
<div class="c m" style="top:448px;left:653px;width:91px">1299</div>
<div class="c m" style="top:448px;left:744px;width:91px">1299</div>
<div class="c m" style="top:448px;left:835px;width:91px">1299</div>
<div class="c m" style="top:448px;left:926px;width:91px">1825</div>
<div class="c m" style="top:448px;left:1017px;width:91px">1256</div>
<div class="c m" style="top:448px;left:1108px;width:91px">1256</div>
<div class="c m" style="top:448px;left:1199px;width:91px">1256</div>
<div class="c m" style="top:448px;left:1290px;width:91px">1256</div>
<div class="c m" style="top:448px;left:1381px;width:91px">1256</div>
<div class="c l clip" style="top:466px;left:32px;width:162px">Mischschrott</div>
<div class="c r" style="top:466px;left:198px;width:91px">2176</div>
<div class="c m" style="top:466px;left:289px;width:91px">2176</div>
<div class="c m" style="top:466px;left:380px;width:91px">2176</div>
<div class="c m" style="top:466px;left:471px;width:91px">2639</div>
<div class="c m" style="top:466px;left:562px;width:91px">3151</div>
<div class="c m" style="top:466px;left:653px;width:91px">3609</div>
<div class="c m" style="top:466px;left:744px;width:91px">3609</div>
<div class="c m" style="top:466px;left:835px;width:91px">3609</div>
<div class="c m" style="top:466px;left:926px;width:91px">4189</div>
<div class="c m" style="top:466px;left:1017px;width:91px">4609</div>
<div class="c m" style="top:466px;left:1108px;width:91px">5151</div>
<div class="c m" style="top:466px;left:1199px;width:91px">5305</div>
<div class="c m" style="top:466px;left:1290px;width:91px">5115</div>
<div class="c m" style="top:466px;left:1381px;width:91px">5115</div>
<div class="c l clip" style="top:484px;left:32px;width:162px">Motorenschrott</div>
<div class="c r" style="top:484px;left:198px;width:91px">118</div>
<div class="c m" style="top:484px;left:289px;width:91px">118</div>
<div class="c m" style="top:484px;left:380px;width:91px">118</div>
<div class="c m" style="top:484px;left:471px;width:91px">118</div>
<div class="c m" style="top:484px;left:562px;width:91px">297</div>
<div class="c m" style="top:484px;left:653px;width:91px">474</div>
<div class="c m" style="top:484px;left:744px;width:91px">474</div>
<div class="c m" style="top:484px;left:835px;width:91px">474</div>
<div class="c m" style="top:484px;left:926px;width:91px">950</div>
<div class="c m" style="top:484px;left:1017px;width:91px">399,9</div>
<div class="c m" style="top:484px;left:1108px;width:91px">649,9</div>
<div class="c m" style="top:484px;left:1199px;width:91px">915,9</div>
<div class="c m" style="top:484px;left:1290px;width:91px">1429,9</div>
<div class="c m" style="top:484px;left:1381px;width:91px">1429,9</div>
<div class="c l clip" style="top:502px;left:32px;width:162px">Motorenschrott Lüfter</div>
<div class="c r" style="top:502px;left:198px;width:91px">929</div>
<div class="c m" style="top:502px;left:289px;width:91px">929</div>
<div class="c m" style="top:502px;left:380px;width:91px">929</div>
<div class="c m" style="top:502px;left:471px;width:91px">929</div>
<div class="c m" style="top:502px;left:562px;width:91px">929</div>
<div class="c m" style="top:502px;left:653px;width:91px">929</div>
<div class="c m" style="top:502px;left:744px;width:91px">929</div>
<div class="c m" style="top:502px;left:835px;width:91px">929</div>
<div class="c m" style="top:502px;left:926px;width:91px">929</div>
<div class="c m" style="top:502px;left:1017px;width:91px">580,1</div>
<div class="c m" style="top:502px;left:1108px;width:91px">580,1</div>
<div class="c m" style="top:502px;left:1199px;width:91px">580,1</div>
<div class="c m" style="top:502px;left:1290px;width:91px">580,1</div>
<div class="c m" style="top:502px;left:1381px;width:91px">580,1</div>
<div class="c l clip" style="top:520px;left:32px;width:162px">NiCd Batterien</div>
<div class="c r" style="top:520px;left:198px;width:91px">2280</div>
<div class="c m" style="top:520px;left:289px;width:91px">2280</div>
<div class="c m" style="top:520px;left:380px;width:91px">2280</div>
<div class="c m" style="top:520px;left:471px;width:91px">2280</div>
<div class="c m" style="top:520px;left:562px;width:91px">2280</div>
<div class="c m" style="top:520px;left:653px;width:91px">2280</div>
<div class="c m" style="top:520px;left:744px;width:91px">2280</div>
<div class="c m" style="top:520px;left:835px;width:91px">2280</div>
<div class="c m" style="top:520px;left:926px;width:91px">2280</div>
<div class="c m" style="top:520px;left:1017px;width:91px">2280</div>
<div class="c m" style="top:520px;left:1108px;width:91px">2280</div>
<div class="c m" style="top:520px;left:1199px;width:91px">2280</div>
<div class="c m" style="top:520px;left:1290px;width:91px">2280</div>
<div class="c m" style="top:520px;left:1381px;width:91px">2280</div>
<div class="c l clip" style="top:538px;left:32px;width:162px">Platinen Sorte I</div>
<div class="c r" style="top:538px;left:198px;width:91px">161</div>
<div class="c m" style="top:538px;left:289px;width:91px">161</div>
<div class="c m" style="top:538px;left:380px;width:91px">161</div>
<div class="c m" style="top:538px;left:471px;width:91px">161</div>
<div class="c m" style="top:538px;left:562px;width:91px">161</div>
<div class="c m" style="top:538px;left:653px;width:91px">161</div>
<div class="c m" style="top:538px;left:744px;width:91px">161</div>
<div class="c m" style="top:538px;left:835px;width:91px">161</div>
<div class="c m" style="top:538px;left:926px;width:91px">161</div>
<div class="c m" style="top:538px;left:1017px;width:91px">161</div>
<div class="c m" style="top:538px;left:1108px;width:91px">327</div>
<div class="c m" style="top:538px;left:1199px;width:91px">327</div>
<div class="c m" style="top:538px;left:1290px;width:91px">434</div>
<div class="c m" style="top:538px;left:1381px;width:91px">434</div>
<div class="c l clip" style="top:556px;left:32px;width:162px">Platinen Sorte II</div>
<div class="c r" style="top:556px;left:198px;width:91px">1569</div>
<div class="c m" style="top:556px;left:289px;width:91px">1569</div>
<div class="c m" style="top:556px;left:380px;width:91px">1569</div>
<div class="c m" style="top:556px;left:471px;width:91px">1569</div>
<div class="c m" style="top:556px;left:562px;width:91px">1569</div>
<div class="c m" style="top:556px;left:653px;width:91px">1569</div>
<div class="c m" style="top:556px;left:744px;width:91px">1569</div>
<div class="c m" style="top:556px;left:835px;width:91px">1569</div>
<div class="c m" style="top:556px;left:926px;width:91px">1569</div>
<div class="c m" style="top:556px;left:1017px;width:91px">1569</div>
<div class="c m" style="top:556px;left:1108px;width:91px">1569</div>
<div class="c m" style="top:556px;left:1199px;width:91px">1569</div>
<div class="c m" style="top:556px;left:1290px;width:91px">1569</div>
<div class="c m" style="top:556px;left:1381px;width:91px">1569</div>
<div class="c l clip" style="top:574px;left:32px;width:162px">Trafo-Öl</div>
<div class="c r" style="top:574px;left:198px;width:91px">1775</div>
<div class="c m" style="top:574px;left:289px;width:91px">1775</div>
<div class="c m" style="top:574px;left:380px;width:91px">1775</div>
<div class="c m" style="top:574px;left:471px;width:91px">1775</div>
<div class="c m" style="top:574px;left:562px;width:91px">1775</div>
<div class="c m" style="top:574px;left:653px;width:91px">1775</div>
<div class="c m" style="top:574px;left:744px;width:91px">1775</div>
<div class="c m" style="top:574px;left:835px;width:91px">1775</div>
<div class="c m" style="top:574px;left:926px;width:91px">1775</div>
<div class="c m" style="top:574px;left:1017px;width:91px">1775</div>
<div class="c m" style="top:574px;left:1108px;width:91px">1775</div>
<div class="c m" style="top:574px;left:1199px;width:91px">1775</div>
<div class="c m" style="top:574px;left:1290px;width:91px">1775</div>
<div class="c m" style="top:574px;left:1381px;width:91px">1775</div>
<div class="c l clip" style="top:592px;left:32px;width:162px">VA-Abfall</div>
<div class="c r" style="top:592px;left:198px;width:91px">1528</div>
<div class="c m" style="top:592px;left:289px;width:91px">1528</div>
<div class="c m" style="top:592px;left:380px;width:91px">1528</div>
<div class="c m" style="top:592px;left:471px;width:91px">1983</div>
<div class="c m" style="top:592px;left:562px;width:91px">1983</div>
<div class="c m" style="top:592px;left:653px;width:91px">2107</div>
<div class="c m" style="top:592px;left:744px;width:91px">2107</div>
<div class="c m" style="top:592px;left:835px;width:91px">2107</div>
<div class="c m" style="top:592px;left:926px;width:91px">2255</div>
<div class="c m" style="top:592px;left:1017px;width:91px">2635</div>
<div class="c m" style="top:592px;left:1108px;width:91px">3040</div>
<div class="c m" style="top:592px;left:1199px;width:91px">3040</div>
<div class="c m" style="top:592px;left:1290px;width:91px">3040</div>
<div class="c m" style="top:592px;left:1381px;width:91px">3040</div>
<div class="c l clip" style="top:610px;left:32px;width:162px">Verpackungen aus Papier</div>
<div class="c r" style="top:610px;left:198px;width:91px">2358</div>
<div class="c m" style="top:610px;left:289px;width:91px">2358</div>
<div class="c m" style="top:610px;left:380px;width:91px">2358</div>
<div class="c m" style="top:610px;left:471px;width:91px">2358</div>
<div class="c m" style="top:610px;left:562px;width:91px">2358</div>
<div class="c m" style="top:610px;left:653px;width:91px">2358</div>
<div class="c m" style="top:610px;left:744px;width:91px">2358</div>
<div class="c m" style="top:610px;left:835px;width:91px">2358</div>
<div class="c m" style="top:610px;left:926px;width:91px">2358</div>
<div class="c m" style="top:610px;left:1017px;width:91px">2358</div>
<div class="c m" style="top:610px;left:1108px;width:91px">2358</div>
<div class="c m" style="top:610px;left:1199px;width:91px">2358</div>
<div class="c m" style="top:610px;left:1290px;width:91px">2358</div>
<div class="c m" style="top:610px;left:1381px;width:91px">2358</div>
<svg style="position:absolute;top:57px;left:284.5px" width="5" height="9" viewBox="0 0 5 9"><path d="M0.6 0.8 L4.2 4.5 L0.6 8.2 Z" fill="#e00000" stroke="#000" stroke-width="1.1" stroke-linejoin="miter"/></svg>
<svg style="position:absolute;top:111px;left:193.5px" width="5" height="9" viewBox="0 0 5 9"><path d="M0.6 0.8 L4.2 4.5 L0.6 8.2 Z" fill="#e00000" stroke="#000" stroke-width="1.1" stroke-linejoin="miter"/></svg>
<svg style="position:absolute;top:615px;left:193.5px" width="5" height="9" viewBox="0 0 5 9"><path d="M0.6 0.8 L4.2 4.5 L0.6 8.2 Z" fill="#e00000" stroke="#000" stroke-width="1.1" stroke-linejoin="miter"/></svg>
<div style="position:absolute;left:203px;top:660px;width:1164px;height:399px;background:#fff;overflow:hidden">
<svg width="1164" height="399" viewBox="203 660 1164 399" style="position:absolute;left:0;top:0">
<line x1="268" y1="680.5" x2="892" y2="680.5" stroke="#b3b3b3" stroke-width="1"/>
<line x1="268" y1="752.66" x2="892" y2="752.66" stroke="#b3b3b3" stroke-width="1"/>
<line x1="268" y1="824.8199999999999" x2="892" y2="824.8199999999999" stroke="#b3b3b3" stroke-width="1"/>
<line x1="268" y1="896.98" x2="892" y2="896.98" stroke="#b3b3b3" stroke-width="1"/>
<line x1="268" y1="969.14" x2="892" y2="969.14" stroke="#b3b3b3" stroke-width="1"/>
<line x1="268" y1="1041.3" x2="892" y2="1041.3" stroke="#b3b3b3" stroke-width="1"/>
<line x1="273.8" y1="680" x2="273.8" y2="1070" stroke="#b3b3b3" stroke-width="1.2"/>
<line x1="891.5" y1="680" x2="891.5" y2="1070" stroke="#b3b3b3" stroke-width="1"/>
<polyline points="538.4,1059 544.8,1058 546.2,1051.6 549,1050.2 551.1,1046.3 891.5,1046.4" fill="none" stroke="#004586" stroke-width="2.9" stroke-linejoin="round" stroke-linecap="butt"/>
<polyline points="426.9,1059 428.6,1050.8 891.5,1050.8" fill="none" stroke="#0084d1" stroke-width="2.9" stroke-linejoin="round" stroke-linecap="butt"/>
<polyline points="401.7,1059 405,1040.7 413.8,1040.7 415.4,1035.2 459.8,1035.2 460.8,1059" fill="none" stroke="#83caff" stroke-width="2.9" stroke-linejoin="round" stroke-linecap="butt"/>
<polyline points="437.9,1059 453.2,1056 455.4,1052.7 498,1052.5 499.6,1040.3 548.3,1040.3 550.6,1020.1 566,1020.1 567.8,1018.2 891.5,1018.1" fill="none" stroke="#aecf00" stroke-width="2.9" stroke-linejoin="round" stroke-linecap="butt"/>
<polyline points="485.4,1059 487.8,1034.4 507.9,1034.4 510.3,1030.2 525.1,1030.2 526.9,1008.3 534,1008.3 535.2,996.7 891.5,996.7" fill="none" stroke="#579d1c" stroke-width="2.9" stroke-linejoin="round" stroke-linecap="butt"/>
<polyline points="494.9,1059 496.7,1038.5 499.6,1022.5 510.3,1022.5 510.9,1059" fill="none" stroke="#ffd320" stroke-width="2.9" stroke-linejoin="round" stroke-linecap="butt"/>
<polyline points="566.6,1059 574.4,1001.2 891.5,1001.2" fill="none" stroke="#ffd320" stroke-width="2.9" stroke-linejoin="round" stroke-linecap="butt"/>
<polyline points="554.7,1059 556.6,1049 562,1048 563,1043 573,1043 574.8,1025.9 891.5,1025.9" fill="none" stroke="#ff950e" stroke-width="2.9" stroke-linejoin="round" stroke-linecap="butt"/>
<polyline points="319.3,1059 326.9,1027.6 337.3,999.1 340,996.9 342.8,989.3 355.4,989.3 359.2,978.3 370.7,978.3 372.9,1011.1 373.3,1012.2 401.7,1012.2 408.3,1002.9 437.9,1002.9 440,991.4 442.2,980.5 453.2,980.5 454.8,977.2 463,977.2 464.7,996.2 473.6,995.8 484.8,995.8 486.6,985.1 493.7,985.1 496.1,980.4 509.7,980.4 513.3,959.1 525.1,959.1 526.9,945.4 542.9,945.4 545.9,966.2 557.2,966.2 560.1,956.1 572,956.1 574.4,951 891.5,951" fill="none" stroke="#ff420e" stroke-width="2.9" stroke-linejoin="round" stroke-linecap="butt"/>
<polyline points="311.6,1059 314.9,1035.2 317.1,1018.8 320.4,1018.8 324.7,983.8 326.9,972.8 332.4,966.3 336.2,966.3 340,957 350.5,957 353.2,972.8 358.7,972.8 361.9,1010 366.3,1013.3 368,1026.5 401,1026.5 402.8,1014.5 449.9,1013.5 451,999.1 472.9,999.1 474.2,986.9 494.9,986.9 497.3,978 520.4,978 522.8,967.4 525.7,961.4 536.4,961.4 538.8,953.1 544.1,953.1 547.1,935.9 560.1,935.9 562.5,931.2 572.4,931.1 574.6,920 891.5,919.8" fill="none" stroke="#4b1f6f" stroke-width="2.9" stroke-linejoin="round" stroke-linecap="butt"/>
<polyline points="312.7,1059 313.8,1051.6 325.8,1051.6 329.1,1042.9 333.5,1042.9 339,1021 343.3,1017.7 354.3,1017.7 357.6,1009 360.9,1005.7 368,1005.7 371.8,990.9 402.8,991.4 403.9,987.6 412.1,987.6 414.3,1024.3 418.2,1001.3 472.9,1001.3 474.5,988.2 512.1,988.1 513.9,968.5 524,968.5 526.9,963.2 543.5,963.2 545.9,998.3 891.5,998.3" fill="none" stroke="#83caff" stroke-width="2.9" stroke-linejoin="round" stroke-linecap="butt"/>
<polyline points="302.8,1059 308.3,1056.6 312.1,1015 323.6,1015 326.4,1005.7 344.4,1005.7 346.6,1022.3 401.7,1022 403.9,1019 452,1019.5 454.3,1018 520.4,1018.3 522.2,1004.1 532.8,1004.1 535.2,1000 558.9,1000 560.7,985.7 564.9,985.7 567.2,978.3 891.5,978.3" fill="none" stroke="#314004" stroke-width="2.9" stroke-linejoin="round" stroke-linecap="butt"/>
<polyline points="561.3,1059 563.7,1051.1 891.5,1051.1" fill="none" stroke="#83caff" stroke-width="2.9" stroke-linejoin="round" stroke-linecap="butt"/>
<polyline points="316,1059 323.6,1028.7 326.9,1022.1 331.3,1018.8 339,994.7 342.8,994.7 344.4,986 355.4,986 359.2,970.6 369.6,970.6 371.2,961.9 374.5,964.6 393.5,965.2 396,959.7 411.6,959.2 414.3,963 417.1,960.2 436.8,960.2 440,954.2 443.8,936.4 452.3,936.4 454.3,923.3 462.4,923.3 464.9,909.3 472.9,909.3 474.9,901.4 484.8,901.6 486.4,891.2 518.2,891.2 519.3,905.4 520.4,930.6 523.7,931.1 542.3,931.1 544.5,915.3 555.4,915.3 560.9,863.2 568,863.2 569.1,844.6 572.9,844.6 574.6,826.6 891.5,826.6" fill="none" stroke="#004586" stroke-width="2.9" stroke-linejoin="round" stroke-linecap="butt"/>
<polyline points="301.7,1059 303.9,1040.2 306.7,1040.2 313.2,1004.6 316,999.7 319.3,999.7 322,978.3 326.9,966.3 330.7,966.3 337.9,944.4 341.7,983.8 344.4,983.8 345.5,974.5 355.4,974.5 360.9,959.7 368.5,959.7 371.8,942.7 401.1,943.4 403.1,940.4 404.6,929.4 414.2,929.4 415.7,921.3 417.7,916.3 418.7,900.7 429.2,900.7 430.2,891.2 437.3,891.2 441.3,888.2 442.3,876.1 449.3,876.1 450.8,869.1 453.3,867.6 454.3,859.6 462.4,859.6 464.9,844 472.9,844 474.9,840.5 484.2,840.3 487.5,820 488.6,815.7 490.8,815.7 491.1,968.7 495.7,968.7 497.4,955.6 499.6,950.1 510.5,950.1 513.2,937.5 520.4,937.5 521.4,932.6 525.8,917.4 532.4,917.4 538.5,884 543,884 545.3,874.5 549.7,868.6 555.5,868.6 558.5,846.7 562.1,833.6 566.5,833.6 569.1,796.5 572.4,798.7 574,779 891.5,779" fill="none" stroke="#7e0021" stroke-width="2.9" stroke-linejoin="round" stroke-linecap="butt"/>
<polyline points="304.5,1059 306.2,1041.8 323.6,1041.8 326.9,1032 331.3,1026.5 336.8,1018.8 340,1012.2 343.3,1003.5 354.8,1003.5 357.6,992.5 360.9,983.8 368.5,983.8 371.8,967.4 378.8,965.7 383.1,957.5 384.8,947.7 393,947.7 395.2,966.8 402.3,966.8 403.4,955.3 414.3,955.3 416.5,947.7 429.1,947.7 430.7,943.8 441.1,943.8 442.3,923.3 452.3,923.3 454.3,903.3 462.4,903.3 464.9,883.2 472.9,883.2 474.9,880.8 494.6,880.8 496.8,870.9 499,870.9 500.1,851.2 524.7,851.2 526.9,848.5 543.4,848.5 545,833.1 548.8,833.1 550.5,827.7 554.9,827.7 556.3,821.9 559.9,821.9 561.4,812 566.4,812 568.5,794.3 570.7,794.3 574,781.2 891.5,781.2" fill="none" stroke="#c5000b" stroke-width="2.9" stroke-linejoin="round" stroke-linecap="butt"/>
<polyline points="279.9,1059 280.4,1054.9 284.2,1054.9 287.5,1005.7 290.2,993.6 292.4,1000.7 296.3,1000.7 298.5,988.2 302.3,948.8 303.9,943.3 307.8,942.7 309.4,940 313.2,923.2 315.7,907.1 320.2,907.1 322.2,903.1 325.7,880 327.5,873 331.1,873 333,867 335.3,862 339.3,834.1 343,834.1 344.8,826.3 353.9,826.3 356.7,822.6 359.8,810.8 361.2,842.3 368.5,842.3 372.2,826.3 378.6,826.3 380.4,814 385,800.4 401.4,800.4 404.1,796.2 407.8,793 410.5,791.2 414.2,791.2 416.9,773.9 418.7,787 429.7,787 431,768.4 437.3,768.4 438.8,747.8 442.4,744.3 449.7,744.3 451.2,736 453.5,733.5 455,724.6 462.5,724.6 464.3,975 472.9,975 475.1,972.3 484.8,972 488.1,957.8 496.3,957.2 498.5,946.3 499.8,934.8 510.5,934.8 511.6,914.2 513.8,911.4 521.5,910.9 522.6,908.7 523.7,931.7 526.9,920.7 533.5,920.7 536.2,903.2 538.4,883.5 542.4,883.5 544.5,846 546.8,843.8 549.7,843.8 551.2,833.6 555.5,833.6 557,817.5 559.2,813.1 562,772.4 566.4,772.4 569.1,757.1 570.7,742.8 573.5,741.8 574.6,729.7 891.5,729.7" fill="none" stroke="#c5000b" stroke-width="2.9" stroke-linejoin="round" stroke-linecap="butt"/>
<polyline points="331.3,1059 336.8,1037.4 343.3,1036.3 345.5,1030.8 367.4,1030.8 370.7,1027.6 402.3,1027.6 406.1,1011.1 408.9,1003.5 418.2,978.3 429.1,978.3 430.7,963 484.8,963.2 487.5,954.2 495.7,954.2 496.3,933.7 498.5,932.6 499.6,919.1 509.4,919.1 512.7,907.6 519.8,907.6 522,890.1 524.7,890.1 526.4,869.3 537.3,869.3 539,857.8 543.4,857.8 546.2,951.3 560.1,951.3 562.5,943.6 568.4,943.6 570.8,940.9 891.5,940.9" fill="none" stroke="#0084d1" stroke-width="2.9" stroke-linejoin="round" stroke-linecap="butt"/>
<line x1="922" y1="809.3" x2="954" y2="809.3" stroke="#004586" stroke-width="3"/>
<line x1="1201" y1="809.3" x2="1233" y2="809.3" stroke="#ff420e" stroke-width="3"/>
<line x1="922" y1="829.1" x2="954" y2="829.1" stroke="#ffd320" stroke-width="3"/>
<line x1="1201" y1="829.1" x2="1233" y2="829.1" stroke="#579d1c" stroke-width="3"/>
<line x1="922" y1="849.0" x2="954" y2="849.0" stroke="#7e0021" stroke-width="3"/>
<line x1="1201" y1="849.0" x2="1233" y2="849.0" stroke="#83caff" stroke-width="3"/>
<line x1="922" y1="868.8" x2="954" y2="868.8" stroke="#314004" stroke-width="3"/>
<line x1="1201" y1="868.8" x2="1233" y2="868.8" stroke="#aecf00" stroke-width="3"/>
<line x1="922" y1="888.7" x2="954" y2="888.7" stroke="#4b1f6f" stroke-width="3"/>
<line x1="1201" y1="888.7" x2="1233" y2="888.7" stroke="#ff950e" stroke-width="3"/>
<line x1="922" y1="908.5" x2="954" y2="908.5" stroke="#c5000b" stroke-width="3"/>
<line x1="1201" y1="908.5" x2="1233" y2="908.5" stroke="#0084d1" stroke-width="3"/>
<line x1="922" y1="928.4" x2="954" y2="928.4" stroke="#004586" stroke-width="3"/>
<line x1="1201" y1="928.4" x2="1233" y2="928.4" stroke="#ff420e" stroke-width="3"/>
<line x1="922" y1="948.2" x2="954" y2="948.2" stroke="#ffd320" stroke-width="3"/>
<line x1="1201" y1="948.2" x2="1233" y2="948.2" stroke="#579d1c" stroke-width="3"/>
<line x1="922" y1="968.1" x2="954" y2="968.1" stroke="#7e0021" stroke-width="3"/>
<line x1="1201" y1="968.1" x2="1233" y2="968.1" stroke="#83caff" stroke-width="3"/>
<line x1="922" y1="987.9" x2="954" y2="987.9" stroke="#314004" stroke-width="3"/>
<line x1="1201" y1="987.9" x2="1233" y2="987.9" stroke="#aecf00" stroke-width="3"/>
<line x1="922" y1="1007.8" x2="954" y2="1007.8" stroke="#4b1f6f" stroke-width="3"/>
<line x1="1201" y1="1007.8" x2="1233" y2="1007.8" stroke="#ff950e" stroke-width="3"/>
<line x1="922" y1="1027.7" x2="954" y2="1027.7" stroke="#c5000b" stroke-width="3"/>
<line x1="1201" y1="1027.7" x2="1233" y2="1027.7" stroke="#0084d1" stroke-width="3"/>
<line x1="922" y1="1047.5" x2="954" y2="1047.5" stroke="#004586" stroke-width="3"/>
<line x1="1201" y1="1047.5" x2="1233" y2="1047.5" stroke="#ff420e" stroke-width="3"/>
</svg>
<div style="position:absolute;left:-3px;top:11.0px;width:64px;text-align:right;font-size:14px;letter-spacing:-0.35px;line-height:18px;color:#000;white-space:nowrap">14000</div>
<div style="position:absolute;left:-3px;top:83.2px;width:64px;text-align:right;font-size:14px;letter-spacing:-0.35px;line-height:18px;color:#000;white-space:nowrap">12000</div>
<div style="position:absolute;left:-3px;top:155.4px;width:64px;text-align:right;font-size:14px;letter-spacing:-0.35px;line-height:18px;color:#000;white-space:nowrap">10000</div>
<div style="position:absolute;left:-3px;top:227.6px;width:64px;text-align:right;font-size:14px;letter-spacing:-0.35px;line-height:18px;color:#000;white-space:nowrap">8000</div>
<div style="position:absolute;left:-3px;top:299.8px;width:64px;text-align:right;font-size:14px;letter-spacing:-0.35px;line-height:18px;color:#000;white-space:nowrap">6000</div>
<div style="position:absolute;left:-3px;top:372.0px;width:64px;text-align:right;font-size:14px;letter-spacing:-0.35px;line-height:18px;color:#000;white-space:nowrap">4000</div>
<div style="position:absolute;left:755px;top:139.8px;font-size:14px;line-height:18px;color:#000;white-space:nowrap">Aluminium I</div>
<div style="position:absolute;left:1034px;top:139.8px;font-size:14px;line-height:18px;color:#000;white-space:nowrap">Aluminium II</div>
<div style="position:absolute;left:755px;top:159.6px;font-size:14px;line-height:18px;color:#000;white-space:nowrap">Aufsaug- und Filtermaterial</div>
<div style="position:absolute;left:1034px;top:159.6px;font-size:14px;line-height:18px;color:#000;white-space:nowrap">Blei</div>
<div style="position:absolute;left:755px;top:179.5px;font-size:14px;line-height:18px;color:#000;white-space:nowrap">Bleibatterien</div>
<div style="position:absolute;left:1034px;top:179.5px;font-size:14px;line-height:18px;color:#000;white-space:nowrap">Dämmmaterial</div>
<div style="position:absolute;left:755px;top:199.3px;font-size:14px;line-height:18px;color:#000;white-space:nowrap">Glas</div>
<div style="position:absolute;left:1034px;top:199.3px;font-size:14px;line-height:18px;color:#000;white-space:nowrap">Holz</div>
<div style="position:absolute;left:755px;top:219.2px;font-size:14px;line-height:18px;color:#000;white-space:nowrap">Kabel I</div>
<div style="position:absolute;left:1034px;top:219.2px;font-size:14px;line-height:18px;color:#000;white-space:nowrap">Kabel II</div>
<div style="position:absolute;left:755px;top:239.0px;font-size:14px;line-height:18px;color:#000;white-space:nowrap">Kabel III</div>
<div style="position:absolute;left:1034px;top:239.0px;font-size:14px;line-height:18px;color:#000;white-space:nowrap">Kabelabfall Gummi</div>
<div style="position:absolute;left:755px;top:258.9px;font-size:14px;line-height:18px;color:#000;white-space:nowrap">Kabelkupfer</div>
<div style="position:absolute;left:1034px;top:258.9px;font-size:14px;line-height:18px;color:#000;white-space:nowrap">Katalysatoren</div>
<div style="position:absolute;left:755px;top:278.8px;font-size:14px;line-height:18px;color:#000;white-space:nowrap">Katalysatoren*</div>
<div style="position:absolute;left:1034px;top:278.8px;font-size:14px;line-height:18px;color:#000;white-space:nowrap">Kondensatoren</div>
<div style="position:absolute;left:755px;top:298.6px;font-size:14px;line-height:18px;color:#000;white-space:nowrap">Kunststoff &amp; Gummi</div>
<div style="position:absolute;left:1034px;top:298.6px;font-size:14px;line-height:18px;color:#000;white-space:nowrap">Kupfer</div>
<div style="position:absolute;left:755px;top:318.4px;font-size:14px;line-height:18px;color:#000;white-space:nowrap">Leuchtstoffröhren</div>
<div style="position:absolute;left:1034px;top:318.4px;font-size:14px;line-height:18px;color:#000;white-space:nowrap">Lithium ION</div>
<div style="position:absolute;left:755px;top:338.3px;font-size:14px;line-height:18px;color:#000;white-space:nowrap">Magnete</div>
<div style="position:absolute;left:1034px;top:338.3px;font-size:14px;line-height:18px;color:#000;white-space:nowrap">Messing</div>
<div style="position:absolute;left:755px;top:358.2px;font-size:14px;line-height:18px;color:#000;white-space:nowrap">Mischschrott</div>
<div style="position:absolute;left:1034px;top:358.2px;font-size:14px;line-height:18px;color:#000;white-space:nowrap">Motorenschrott</div>
<div style="position:absolute;left:755px;top:378.0px;font-size:14px;line-height:18px;color:#000;white-space:nowrap">Motorenschrott Lüfter</div>
<div style="position:absolute;left:1034px;top:378.0px;font-size:14px;line-height:18px;color:#000;white-space:nowrap">NiCd Batterien</div>
</div>
<div style="position:absolute;left:0;top:1059px;width:1423px;height:12px;background:#3b3b3b"></div>
<div style="position:absolute;left:0;top:1071px;width:1423px;height:25px;background:#383838"></div>
<div style="position:absolute;left:4px;top:1062px;width:112px;height:6px;border-radius:3px;background:#7d7d7d"></div>
<svg style="position:absolute;left:0;top:1070px" width="130" height="26" viewBox="0 0 130 26"><g stroke="#8a8a8a" stroke-width="2" fill="none"><path d="M11.5 4.5 V18"/><path d="M22 4.5 L15.5 11.2 L22 18"/><path d="M91.5 4.5 V18"/><path d="M81.5 4.5 L88 11.2 L81.5 18"/></g><g fill="#8a8a8a"><circle cx="23.6" cy="11.3" r="0.9"/><circle cx="78.7" cy="11.3" r="0.9"/><rect x="33" y="7" width="1.8" height="8.5"/><path d="M34.5 11.2 L40.5 7 V15.5 Z"/><path d="M40.5 11.2 L46.5 7 V15.5 Z"/><rect x="68.2" y="7" width="1.8" height="8.5"/><path d="M68.5 11.2 L62.5 7 V15.5 Z"/><path d="M62.5 11.2 L56.5 7 V15.5 Z"/></g><path d="M108 4 H117.5 L120 6.5 V20 H108 Z" fill="#f4f4f4"/><path d="M117.5 4 V6.5 H120" fill="none" stroke="#bbb" stroke-width="0.8"/><circle cx="119.5" cy="12.5" r="3.7" fill="#2c6ab8"/><path d="M119.5 10.3 V14.7 M117.3 12.5 H121.7" stroke="#fff" stroke-width="1.3"/></svg>
<div style="position:absolute;left:133px;top:1071px;width:103px;height:23px;background:#7f7f7f"></div>
<div style="position:absolute;left:236px;top:1071px;width:226px;height:20px;background:#3d3d3d"></div>
<div style="position:absolute;left:236px;top:1091px;width:226px;height:3px;background:#e6e6e6"></div>
<div style="position:absolute;left:865px;top:1071px;width:244px;height:23px;background:#7f7f7f"></div>
<div style="position:absolute;left:1109px;top:1071px;width:273px;height:23px;background:#333333"></div>
<div style="position:absolute;left:670px;top:1076px;width:1px;height:12px;background:#6a6a6a"></div>
<svg style="position:absolute;left:239px;top:1073px" width="16" height="18" viewBox="0 0 16 18"><path d="M3.8 8.6 V5 A3.7 3.7 0 0 1 11.2 5 V8.6" fill="none" stroke="#8a8a8a" stroke-width="1.6"/><rect x="1" y="9" width="13.2" height="7.4" fill="#fff" stroke="#8c8c8c" stroke-width="1.4"/></svg>
<svg style="position:absolute;left:463px;top:1073px" width="16" height="18" viewBox="0 0 16 18"><path d="M3.8 8.6 V5 A3.7 3.7 0 0 1 11.2 5 V8.6" fill="none" stroke="#8a8a8a" stroke-width="1.6"/><rect x="1" y="9" width="13.2" height="7.4" fill="#fff" stroke="#8c8c8c" stroke-width="1.4"/></svg>
<svg style="position:absolute;left:1110px;top:1073px" width="16" height="18" viewBox="0 0 16 18"><path d="M3.8 8.6 V5 A3.7 3.7 0 0 1 11.2 5 V8.6" fill="none" stroke="#8a8a8a" stroke-width="1.6"/><rect x="1" y="9" width="13.2" height="7.4" fill="#fff" stroke="#8c8c8c" stroke-width="1.4"/></svg>
<div style="position:absolute;left:146.7px;top:1074px;font-size:13px;line-height:15px;font-weight:normal;color:#eaeaea;white-space:nowrap;transform:scaleX(0.9469);transform-origin:0 0">Lagerbestand</div>
<div style="position:absolute;left:259.7px;top:1074px;font-size:13px;line-height:15px;font-weight:bold;color:#e8e8e8;white-space:nowrap;transform:scaleX(0.9349);transform-origin:0 0">Tagesübersicht Zerlegte Stoffe</div>
<div style="position:absolute;left:484.4px;top:1074px;font-size:13px;line-height:15px;font-weight:normal;color:#eaeaea;white-space:nowrap;transform:scaleX(0.9840);transform-origin:0 0">Übersicht Wiederverwertung</div>
<div style="position:absolute;left:683.9px;top:1074px;font-size:13px;line-height:15px;font-weight:normal;color:#eaeaea;white-space:nowrap;transform:scaleX(0.9297);transform-origin:0 0">Pivot_Eingang_Beh_Entnahme</div>
<div style="position:absolute;left:877.9px;top:1074px;font-size:13px;line-height:15px;font-weight:normal;color:#eaeaea;white-space:nowrap;transform:scaleX(0.9283);transform-origin:0 0">Eingang</div>
<div style="position:absolute;left:948.0px;top:1074px;font-size:13px;line-height:15px;font-weight:normal;color:#eaeaea;white-space:nowrap;transform:scaleX(0.9523);transform-origin:0 0">Behandlung</div>
<div style="position:absolute;left:1038.8px;top:1074px;font-size:13px;line-height:15px;font-weight:normal;color:#eaeaea;white-space:nowrap;transform:scaleX(0.9448);transform-origin:0 0">Entnahme</div>
<div style="position:absolute;left:1135.8px;top:1074px;font-size:13px;line-height:15px;font-weight:normal;color:#eaeaea;white-space:nowrap;transform:scaleX(0.9548);transform-origin:0 0">Auswahllisten_Stoffe</div>
<div style="position:absolute;left:1291.8px;top:1074px;font-size:13px;line-height:15px;font-weight:normal;color:#eaeaea;white-space:nowrap;transform:scaleX(0.9983);transform-origin:0 0">Konfiguration</div>
</body></html>
